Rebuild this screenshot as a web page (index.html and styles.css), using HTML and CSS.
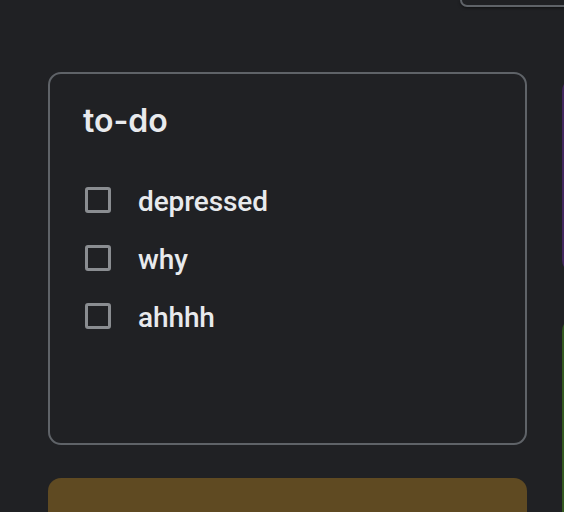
FILE: index.html
```html
<!DOCTYPE html>
<html>
<head>
<meta charset="utf-8">
<link rel="stylesheet" href="styles.css">
</head>
<body>
<div class="topbar"><div class="popup"></div></div>
<div class="board">
  <div class="col col-main">
    <div class="card card-outline">
      <div class="title">to-do</div>
      <div class="list">
        <div class="item"><span class="box"></span><span class="label">depressed</span></div>
        <div class="item"><span class="box"></span><span class="label">why</span></div>
        <div class="item"><span class="box"></span><span class="label">ahhhh</span></div>
      </div>
    </div>
    <div class="card card-sand"></div>
  </div>
  <div class="col col-side">
    <div class="card card-purple"></div>
    <div class="card card-green"></div>
  </div>
</div>
</body>
</html>
```
FILE: styles.css
```css
html, body {
  margin: 0;
  padding: 0;
  background: #202124;
  overflow: hidden;
  width: 564px;
  height: 512px;
}
body {
  font-family: Roboto, "Liberation Sans", sans-serif;
  color: #e8eaed;
}
.topbar {
  height: 7px;
  display: flex;
  justify-content: flex-end;
}
.popup {
  width: 120px;
  height: 5px;
  margin-right: -20px;
  border: 2px solid #5f6368;
  border-top: none;
  border-radius: 0 0 0 14px;
  background: #202124;
  box-shadow: 0 1px 3px rgba(0,0,0,0.5);
}
.board {
  display: flex;
  gap: 35px;
  padding-left: 48px;
  margin-top: 65px;
}
.col {
  display: flex;
  flex-direction: column;
  flex-shrink: 0;
}
.col-main {
  width: 479px;
  gap: 33px;
}
.col-side {
  width: 200px;
  gap: 45px;
  padding-top: 6px;
}
.card {
  border-radius: 13px;
  box-sizing: border-box;
}
.card-outline {
  border: 2px solid #5f6368;
  height: 373px;
  padding: 27px 0 0 33px;
}
.card-sand {
  background: #5f4a22;
  height: 120px;
}
.card-purple {
  background: #42275e;
  height: 195px;
}
.card-green {
  background: #345920;
  height: 240px;
}
.title {
  font-family: Inter, "Open Sans", sans-serif;
  font-weight: 600;
  font-size: 32px;
  line-height: 40px;
  letter-spacing: 0;
}
.list {
  margin-top: 32px;
  display: flex;
  flex-direction: column;
}
.item {
  display: flex;
  align-items: center;
  height: 58px;
}
.box {
  width: 26px;
  height: 26px;
  box-sizing: border-box;
  border: 3px solid #8a8d91;
  border-radius: 3px;
  margin-left: 2px;
  margin-bottom: 4px;
  flex-shrink: 0;
}
.label {
  margin-left: 27px;
  font-size: 28px;
  font-weight: 500;
  line-height: 58px;
  letter-spacing: -0.1px;
}
```
